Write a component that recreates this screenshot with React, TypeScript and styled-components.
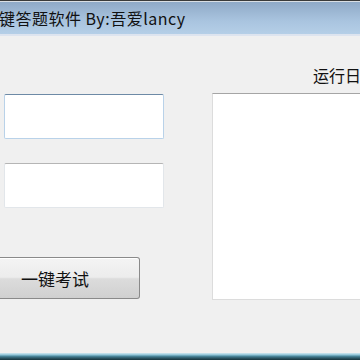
import React from "react";
import styled, { createGlobalStyle } from "styled-components";

const Global = createGlobalStyle`
  html, body { margin: 0; padding: 0; background: #f0f0f0; }
  body { font-family: "Noto Sans CJK SC", "Noto Sans", sans-serif; }
`;

const Window = styled.div`
  width: 360px;
  height: 360px;
  overflow: hidden;
  background: #f0f0f0;
  display: flex;
  flex-direction: column;
`;

const TitleBar = styled.div`
  height: 33px;
  border-top: 1px solid #3a3a3a;
  box-shadow: inset 0 1px 0 #d9dee4;
  border-bottom: 2px solid #dde4ef;
  background: linear-gradient(#8ea8c6, #a9c4df 60%, #b5cfe7);
  display: flex;
  align-items: center;
  flex-shrink: 0;
`;

const Title = styled.span`
  font-size: 16px;
  letter-spacing: 0.5px;
  color: #111;
  white-space: nowrap;
  margin-left: -1px;
  line-height: 1;
`;

const Body = styled.div`
  flex: 1;
  display: flex;
`;

const LeftCol = styled.div`
  width: 212px;
  flex-shrink: 0;
  display: flex;
  flex-direction: column;
  padding-top: 58px;
`;

const TextBox = styled.div<{ $focused?: boolean }>`
  margin-left: 4px;
  width: 158px;
  height: 43px;
  margin-bottom: 24px;
  background: #fff;
  border: 1px solid ${(p) => (p.$focused ? "#b9d2e9" : "#e2e6ea")};
  border-top-color: ${(p) => (p.$focused ? "#6d8aa6" : "#b5b5b5")};
  border-radius: 2px;
`;

const Button = styled.button`
  margin-top: 25px;
  width: 140px;
  height: 42px;
  padding: 0 0 0 21px;
  display: flex;
  align-items: center;
  font-family: "Noto Sans CJK SC", sans-serif;
  font-size: 17px;
  color: #111;
  border: 1px solid #8a8a8a;
  border-left: none;
  border-radius: 0 3px 3px 0;
  background: linear-gradient(#f4f4f4 0%, #ececec 48%, #dcdcdc 52%, #d0d0d0 100%);
  box-shadow: inset 0 1px 0 #fff;
`;

const RightCol = styled.div`
  flex: 1;
  display: flex;
  flex-direction: column;
`;

const Label = styled.div`
  margin-top: 28px;
  padding-left: 101px;
  height: 22px;
  font-size: 16px;
  line-height: 22px;
  color: #111;
  white-space: nowrap;
`;

const LogBox = styled.div`
  margin-top: 7px;
  width: 160px;
  height: 205px;
  background: #fff;
  border: 1px solid #dcdcdc;
  border-top-color: #a5a5a5;
`;

const Frame = styled.div`
  height: 7px;
  flex-shrink: 0;
  background: linear-gradient(#d6eaf1 0px, #a9d3e2 1px, #8fc3d6 2px, #4f8ea3 3px, #2c5968 5px, #16323b 7px);
`;

export default function App() {
  return (
    <>
      <Global />
      <Window>
        <TitleBar>
          <Title>键答题软件 By:吾爱lancy</Title>
        </TitleBar>
        <Body>
          <LeftCol>
            <TextBox $focused />
            <TextBox />
            <Button>一键考试</Button>
          </LeftCol>
          <RightCol>
            <Label>运行日志</Label>
            <LogBox />
          </RightCol>
        </Body>
        <Frame />
      </Window>
    </>
  );
}
